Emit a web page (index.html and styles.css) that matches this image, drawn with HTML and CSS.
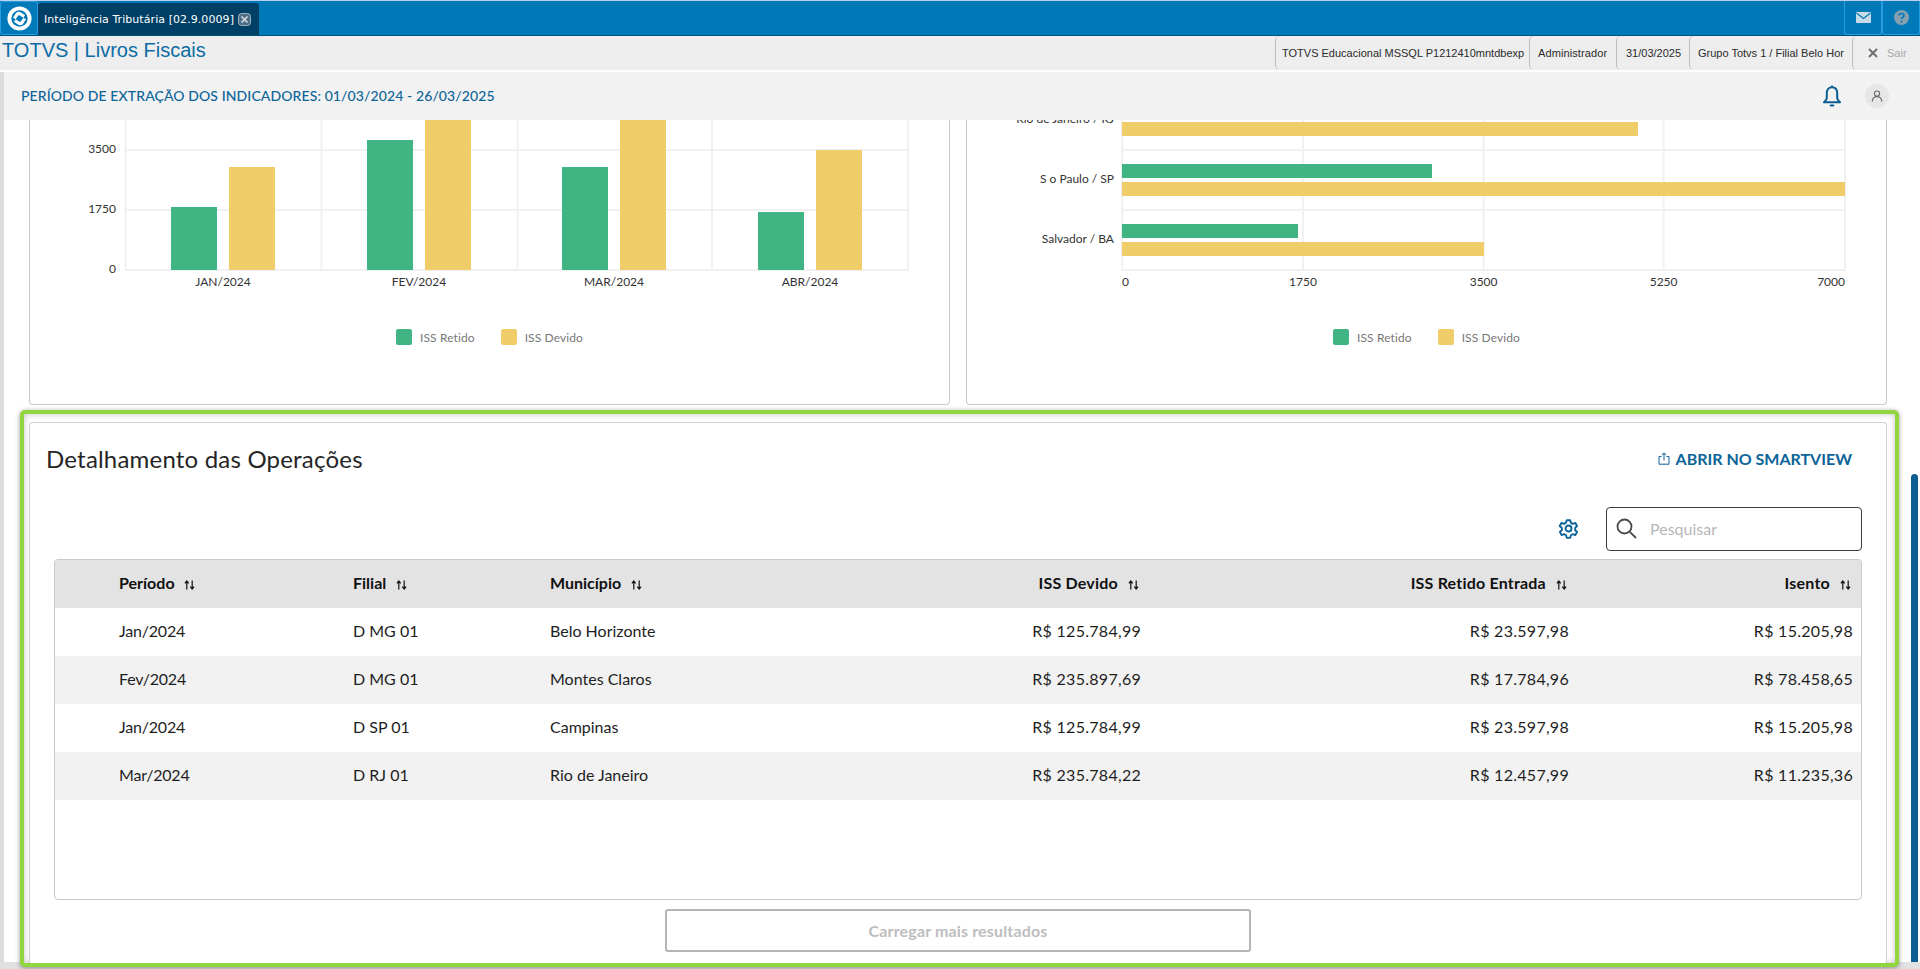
FILE: index.html
```html
<!DOCTYPE html>
<html lang="pt-BR">
<head>
<meta charset="utf-8">
<title>TOTVS | Livros Fiscais</title>
<link rel="stylesheet" href="styles.css">
</head>
<body>
<div class="app">
  <header class="tabbar">
    <button class="logo-btn" aria-label="TOTVS">
      <svg width="25" height="25" viewBox="0 0 30 30"><circle cx="15" cy="15" r="14.500" fill="#fff"/><circle cx="15" cy="15" r="9.800" fill="#0079b8"/><path d="M7.500 12.500 12.500 7.500Q15 6 17.500 7.500L22.500 12.500 19.600 15 15.800 11.300Q15 10.600 14.200 11.300L10.400 15Z M7.500 17.500 10.400 15 14.200 18.700Q15 19.400 15.800 18.700L19.600 15 22.500 17.500 17.500 22.500Q15 24 12.500 22.500Z" fill="#fff" transform="rotate(-12 15 15)"/></svg>
    </button>
    <div class="tab">
      <span class="tab-label">Inteligência Tributária [02.9.0009]</span>
      <svg class="tab-close" width="13" height="13" viewBox="0 0 13 13"><rect x="0.5" y="0.5" width="12" height="12" rx="3" fill="#4d6f86" stroke="#9fb2bf"/><path d="M3.500 3.500 9.500 9.500M9.500 3.500 3.500 9.500" stroke="#d5dde2" stroke-width="1.600"/></svg>
    </div>
    <div class="tabbar-fill"></div>
    <button class="tool-btn" aria-label="Mensagens">
      <svg width="15" height="11" viewBox="0 0 15 11"><rect width="15" height="11" rx="1" fill="#c9dbe6"/><path d="M0.500 1 7.500 6.500 14.500 1" fill="none" stroke="#0079b8" stroke-width="1.200"/></svg>
    </button>
    <button class="tool-btn" aria-label="Ajuda">
      <svg width="15" height="15" viewBox="0 0 15 15"><circle cx="7.500" cy="7.500" r="7.500" fill="#87a0b0"/><path d="M5 5.600C5 2.800 10 2.800 10 5.600 10 7.200 7.600 7.200 7.600 9" fill="none" stroke="#0079b8" stroke-width="1.700"/><circle cx="7.600" cy="11.500" r="1.100" fill="#0079b8"/></svg>
    </button>
  </header>

  <div class="infobar">
    <div class="app-title">TOTVS | Livros Fiscais</div>
    <div class="info-cell cell-env">TOTVS Educacional MSSQL P1212410mntdbexp</div>
    <div class="info-cell cell-user">Administrador</div>
    <div class="info-cell cell-date">31/03/2025</div>
    <div class="info-cell cell-group">Grupo Totvs 1 / Filial Belo Hor</div>
    <div class="info-cell cell-exit">
      <svg width="10" height="10" viewBox="0 0 10 10"><path d="M1 1 9 9M9 1 1 9" stroke="#6f6f6f" stroke-width="2"/></svg>
      <span class="exit-label">Sair</span>
    </div>
  </div>

  <div class="pagehead">
    <h1 class="period">PERÍODO DE EXTRAÇÃO DOS INDICADORES: 01/03/2024 - 26/03/2025</h1>
    <svg class="bell" width="18" height="22" viewBox="0 0 18 22"><path d="M9 2.200C5.400 2.200 3.800 5 3.800 8.200V13C3.800 15 2.200 16 1 17.200H17C15.800 16 14.200 15 14.200 13V8.200C14.200 5 12.600 2.200 9 2.200Z" fill="none" stroke="#0c5f90" stroke-width="2" stroke-linejoin="round"/><path d="M9 0.400V2.200" stroke="#0c5f90" stroke-width="1.800"/><rect x="6.600" y="19.400" width="4.800" height="2" rx="1" fill="#0c5f90"/></svg>
    <div class="avatar">
      <svg width="12" height="12" viewBox="0 0 12 12"><circle cx="6" cy="3.600" r="2.600" fill="none" stroke="#6a6a6a" stroke-width="1.100"/><path d="M1.200 11.600C1.400 8.600 3 6.600 6 6.600S10.600 8.600 10.800 11.600" fill="none" stroke="#6a6a6a" stroke-width="1.100"/></svg>
    </div>
  </div>

  <main class="main">
    <div class="shadow-strip"></div>
    <div class="content">
      <section class="charts">
        <article class="chart-card">
          <svg class="chart" width="919" height="180" viewBox="0 0 919 180">
            <g class="grid">
              <path d="M95.500 0V151M291.500 0V151M487.500 0V151M682 0V151M878 0V151M95.500 30H878M95.500 90H878M95.500 150H878"/>
            </g>
            <rect class="bar-green" x="141" y="87" width="46" height="63"/>
            <rect class="bar-yellow" x="199" y="47" width="46" height="103"/>
            <rect class="bar-green" x="337" y="20" width="46" height="130"/>
            <rect class="bar-yellow" x="395" y="0" width="46" height="150"/>
            <rect class="bar-green" x="532" y="47" width="46" height="103"/>
            <rect class="bar-yellow" x="590" y="0" width="46" height="150"/>
            <rect class="bar-green" x="728" y="92" width="46" height="58"/>
            <rect class="bar-yellow" x="786" y="30" width="46" height="120"/>
            <text class="axis end" x="86" y="33">3500</text>
            <text class="axis end" x="86" y="93">1750</text>
            <text class="axis end" x="86" y="153">0</text>
            <text class="axis mid" x="193" y="166">JAN/2024</text>
            <text class="axis mid" x="389" y="166">FEV/2024</text>
            <text class="axis mid" x="584" y="166">MAR/2024</text>
            <text class="axis mid" x="780" y="166">ABR/2024</text>
          </svg>
          <div class="legend">
            <span class="legend-item"><i class="swatch swatch-green"></i>ISS Retido</span>
            <span class="legend-item"><i class="swatch swatch-yellow"></i>ISS Devido</span>
          </div>
        </article>
        <article class="chart-card">
          <svg class="chart" width="919" height="180" viewBox="0 0 919 180">
            <g class="grid">
              <path d="M155 0V151M336 0V151M516.600 0V151M696.600 0V151M878 0V151M155 30H878M155 90H878M155 150H878"/>
            </g>
            <rect class="bar-yellow" x="155" y="2" width="516" height="14"/>
            <rect class="bar-green" x="155" y="44" width="310" height="14"/>
            <rect class="bar-yellow" x="155" y="62" width="723" height="14"/>
            <rect class="bar-green" x="155" y="104" width="176" height="14"/>
            <rect class="bar-yellow" x="155" y="122" width="362" height="14"/>
            <text class="axis end" x="147" y="3">Rio de Janeiro / RJ</text>
            <text class="axis end" x="147" y="63">S o Paulo / SP</text>
            <text class="axis end" x="147" y="123">Salvador / BA</text>
            <text class="axis" x="155" y="166">0</text>
            <text class="axis mid" x="336" y="166">1750</text>
            <text class="axis mid" x="516.600" y="166">3500</text>
            <text class="axis mid" x="696.600" y="166">5250</text>
            <text class="axis end" x="878" y="166">7000</text>
          </svg>
          <div class="legend">
            <span class="legend-item"><i class="swatch swatch-green"></i>ISS Retido</span>
            <span class="legend-item"><i class="swatch swatch-yellow"></i>ISS Devido</span>
          </div>
        </article>
      </section>

      <section class="highlight">
        <div class="detail-card">
          <div class="detail-head">
            <h2 class="detail-title">Detalhamento das Operações</h2>
            <a class="smartview">
              <svg width="12" height="13" viewBox="0 0 12 13"><path d="M3.500 4.500H1V12.200H11V4.500H8.500" fill="none" stroke="#0c6598"/><path d="M6 8.500V1M3.800 3 6 .9 8.200 3" fill="none" stroke="#0c6598"/></svg>
              ABRIR NO SMARTVIEW
            </a>
          </div>
          <div class="toolbar">
            <svg class="gear" width="21" height="21" viewBox="0 0 24 24"><path d="M10 2.500h4l.7 3 2.200 1.200 2.900-1 2 3.500-2.200 2.100v2.600l2.200 2.100-2 3.500-2.900-1-2.200 1.200-.7 3h-4l-.7-3-2.200-1.200-2.900 1-2-3.500 2.200-2.100v-2.600L1.900 9.200l2-3.500 2.900 1L9 5.500z" fill="none" stroke="#0c6598" stroke-width="2.200" stroke-linejoin="round"/><circle cx="12" cy="12" r="3.400" fill="none" stroke="#0c6598" stroke-width="2.200"/></svg>
            <label class="search">
              <svg width="21" height="21" viewBox="0 0 21 21"><circle cx="8.500" cy="8.500" r="7" fill="none" stroke="#4a4a4a" stroke-width="1.800"/><path d="M13.800 13.800 20 20" stroke="#4a4a4a" stroke-width="1.800"/></svg>
              <span class="search-placeholder">Pesquisar</span>
            </label>
          </div>
          <div class="table-wrap">
            <table class="data">
              <colgroup>
                <col class="c1"><col class="c2"><col class="c3"><col class="c4"><col class="c5"><col class="c6">
              </colgroup>
              <thead>
                <tr>
                  <th class="first">Período <svg class="sort" width="11" height="10" viewBox="0 0 11 10"><use href="#sort"/></svg></th>
                  <th>Filial <svg class="sort" width="11" height="10" viewBox="0 0 11 10"><use href="#sort"/></svg></th>
                  <th>Município <svg class="sort" width="11" height="10" viewBox="0 0 11 10"><use href="#sort"/></svg></th>
                  <th class="num">ISS Devido <svg class="sort" width="11" height="10" viewBox="0 0 11 10"><use href="#sort"/></svg></th>
                  <th class="num">ISS Retido Entrada <svg class="sort" width="11" height="10" viewBox="0 0 11 10"><use href="#sort"/></svg></th>
                  <th class="num last">Isento <svg class="sort" width="11" height="10" viewBox="0 0 11 10"><use href="#sort"/></svg></th>
                </tr>
              </thead>
              <tbody>
                <tr><td class="first">Jan/2024</td><td>D MG 01</td><td>Belo Horizonte</td><td class="num">R$ 125.784,99</td><td class="num">R$ 23.597,98</td><td class="num last">R$ 15.205,98</td></tr>
                <tr><td class="first">Fev/2024</td><td>D MG 01</td><td>Montes Claros</td><td class="num">R$ 235.897,69</td><td class="num">R$ 17.784,96</td><td class="num last">R$ 78.458,65</td></tr>
                <tr><td class="first">Jan/2024</td><td>D SP 01</td><td>Campinas</td><td class="num">R$ 125.784,99</td><td class="num">R$ 23.597,98</td><td class="num last">R$ 15.205,98</td></tr>
                <tr><td class="first">Mar/2024</td><td>D RJ 01</td><td>Rio de Janeiro</td><td class="num">R$ 235.784,22</td><td class="num">R$ 12.457,99</td><td class="num last">R$ 11.235,36</td></tr>
              </tbody>
            </table>
          </div>
          <button class="load-more">Carregar mais resultados</button>
        </div>
      </section>
    </div>
    <div class="scroll-track"><div class="scroll-thumb"></div></div>
  </main>
</div>
<svg class="defs" width="0" height="0">
  <symbol id="sort" viewBox="0 0 11 10">
    <path d="M2.800 9.500V1.500M.9 3.300 2.800 1 4.700 3.300" fill="none" stroke="#111" stroke-width="1.200"/>
    <path d="M8.200 .5V8.500M6.300 6.700 8.200 9 10.100 6.700" fill="none" stroke="#111" stroke-width="1.200"/>
  </symbol>
</svg>
</body>
</html>
```
FILE: styles.css
```css
* { box-sizing: border-box; }
html, body { margin: 0; height: 100%; overflow: hidden; background: #fff; }
body { font-family: "Lato", "Open Sans", sans-serif; color: #1f1f1f; }
button { font: inherit; }
.defs { display: block; height: 0; }

.app { display: flex; flex-direction: column; height: 969px; }

/* Top blue tab bar */
.tabbar {
  display: flex; align-items: stretch; height: 36px; flex: none;
  background: #0079b8; border-top: 1px solid #bcd0ea; border-bottom: 1px solid #00507f;
}
.logo-btn {
  width: 38px; padding: 0; display: flex; align-items: center; justify-content: center;
  background: #0079b8; border: 1px solid #2a9be0; border-radius: 3px;
}
.tab {
  width: 221px; margin-top: 2px; display: flex; align-items: center; padding-left: 6px;
  background: #003f66; border-radius: 3px 3px 0 0; color: #fff;
}
.tab-label { font: 11px/1 "DejaVu Sans", sans-serif; letter-spacing: .07px; white-space: nowrap; }
.tab-close { margin-left: 4px; }
.tabbar-fill { flex: 1; }
.tool-btn {
  width: 38px; padding: 0; display: flex; align-items: center; justify-content: center;
  background: #0079b8; border: 1px solid #2a9be0; border-top: 0; border-radius: 0 0 3px 3px;
}

/* Info bar */
.infobar {
  display: flex; align-items: stretch; height: 34px; flex: none; background: #eee;
  font: 11px "Liberation Sans", Arial, sans-serif; color: #2b2b2b;
}
.app-title {
  flex: 1; padding-left: 2px; font-size: 20px; line-height: 28px; color: #0d6ca5;
  font-family: "Liberation Sans", Arial, sans-serif;
}
.info-cell {
  display: flex; align-items: center; padding-left: 6px; white-space: nowrap;
  border-left: 1px solid #bdbdbd; border-radius: 5px 0 0 5px;
}
.cell-env { width: 254px; }
.cell-user { width: 87px; padding-left: 8px; letter-spacing: .1px; }
.cell-date { width: 73px; padding-left: 9px; }
.cell-group { width: 163px; padding-left: 8px; }
.cell-exit { width: 68px; padding-left: 15px; gap: 9px; }
.exit-label { color: #a9a9a9; }

/* Page head */
.pagehead {
  display: flex; align-items: center; height: 48px; flex: none; margin-top: 2px;
  border-left: 4px solid #dcdcdc; padding: 0 31px 0 17px; background: #f2f2f2;
}
.period {
  flex: 1; margin: 0 0 2px; font-size: 14px; font-weight: 500; letter-spacing: .1px; color: #0c6598; white-space: nowrap;
}
.bell { margin-right: 24px; }
.avatar {
  width: 24px; height: 24px; border-radius: 50%; background: #e6e6e6;
  display: flex; align-items: center; justify-content: center;
}

/* Main */
.main { display: flex; flex: 1; min-height: 0; background: #e1e1e1; overflow: hidden; }
.shadow-strip { width: 4px; height: 842px; background: #dcdcdc; flex: none; }
.content { flex: 1; min-width: 0; height: 842px; background: #fff; }
.scroll-track {
  width: 9px; height: 842px; flex: none; background: #fff; display: flex; flex-direction: column;
  justify-content: flex-end; padding-right: 2px;
}
.scroll-thumb { height: 488px; background: #0c5f90; border-radius: 4px 4px 0 0; }

.charts { display: grid; grid-template-columns: 1fr 1fr; gap: 16px; padding: 0 24px 0 25px; }
.chart-card {
  height: 285px; background: #fff; border: 1px solid #c9c9c9; border-top: 0; border-radius: 0 0 4px 4px;
}
.chart { display: block; }
.grid path { fill: none; stroke: #f1f1f1; stroke-width: 2; }
.bar-green { fill: #41b483; }
.bar-yellow { fill: #f0cd69; }
.axis { font-size: 12px; fill: #333; }
.end { text-anchor: end; }
.mid { text-anchor: middle; }
.legend {
  display: flex; justify-content: center; gap: 26px; margin-top: 29px;
  font-size: 12px; letter-spacing: .1px; color: #777;
}
.legend-item { display: flex; align-items: center; gap: 8px; height: 16px; }
.swatch { width: 16px; height: 16px; border-radius: 2px; }
.swatch-green { background: #41b483; }
.swatch-yellow { background: #f0cd69; }

/* Highlighted detail */
.highlight {
  height: 557px; margin: 5px 12px 0 16px; padding: 8px 8px 0 5px;
  border: 4px solid #93d53f; border-radius: 5px; background: #fff; position: relative;
  box-shadow: 0 1px 5px rgba(0,0,0,.4), inset 0 0 6px rgba(0,0,0,.25);
}
.detail-card {
  height: 100%; background: #fff; border: 1px solid #cfcfcf; border-bottom: 0; border-radius: 4px 4px 0 0;
  padding: 0 24px 0 24px; display: flex; flex-direction: column;
}
.detail-head {
  display: flex; align-items: center; justify-content: space-between; height: 76px; flex: none;
  padding: 0 10px 5px 0; margin-left: -8px;
}
.detail-title { margin: 0; font-size: 24px; font-weight: 400; letter-spacing: .2px; color: #252525; white-space: nowrap; }
.smartview {
  display: flex; align-items: center; gap: 6px; font-size: 16px; font-weight: 700; color: #0c6598;
}
.toolbar { display: flex; align-items: center; justify-content: flex-end; gap: 27px; height: 44px; margin-top: 8px; flex: none; }
.gear { margin-bottom: 2px; }
.search {
  display: flex; align-items: center; gap: 13px; width: 256px; height: 44px; padding: 0 0 2px 9px;
  border: 1px solid #3c3c3c; border-radius: 4px; background: #fff;
}
.search-placeholder { font-size: 16px; color: #b7b7b7; }

.table-wrap {
  height: 341px; margin-top: 8px; flex: none; border: 1px solid #c9c9c9; border-radius: 4px; overflow: hidden;
}
.data { width: 1806px; border-collapse: collapse; table-layout: fixed; font-size: 16px; }
.c1 { width: 282px; } .c2 { width: 197px; } .c3 { width: 366px; }
.c4 { width: 257px; } .c5 { width: 428px; } .c6 { width: 276px; }
.data th, .data td { height: 48px; padding: 0 16px 4px; text-align: left; white-space: nowrap; color: #1e1e1e; }
.data th { background: #e3e3e3; font-weight: 700; color: #111; }
.data tbody tr:nth-child(even) td { background: #f2f2f2; }
.data .first { padding-left: 64px; }
.data td.first { letter-spacing: -.2px; }
.data .num { text-align: right; }
.data td.num { letter-spacing: .28px; }
.data th.num { letter-spacing: .2px; padding-right: 18px; }
.data .last { padding-right: 8px; }
.data th.last { padding-right: 10px; }
.sort { margin-left: 6px; vertical-align: -1px; }

.load-more {
  width: 586px; height: 43px; margin: 9px auto 0; flex: none; background: #fff;
  border: 2px solid #b5b5b5; border-radius: 3px; font-size: 16px; font-weight: 700; letter-spacing: .15px; color: #bdbdbd;
}
```
